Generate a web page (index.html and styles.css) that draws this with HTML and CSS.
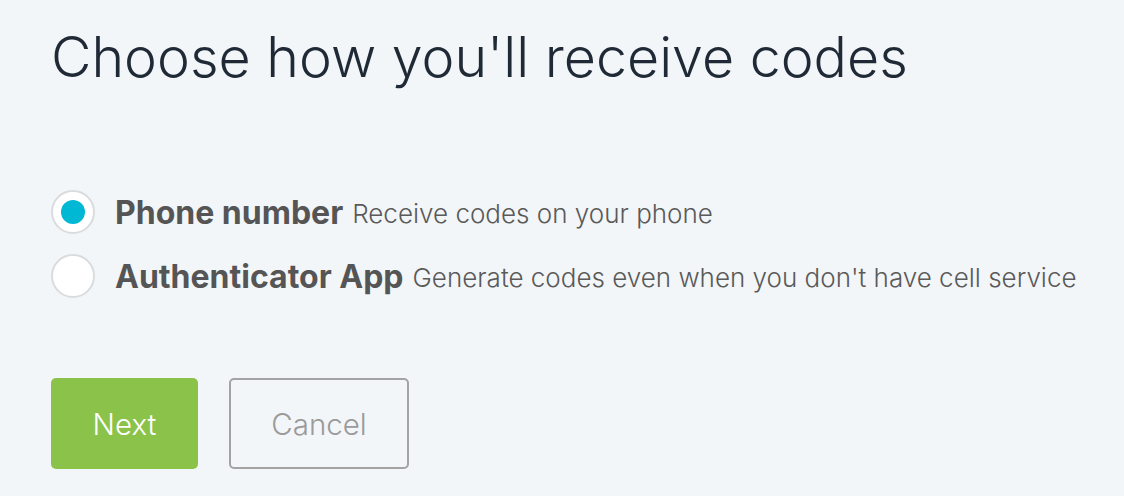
FILE: index.html
```html
<!DOCTYPE html>
<html lang="en">
<head>
    <meta charset="UTF-8">
    <meta name="viewport" content="width=device-width, initial-scale=1.0">
    <title>Two-factor setup</title>
    <link rel="stylesheet" href="styles.css">
</head>
<body>
    <div class="container">
        <h1>Choose how you'll receive codes</h1>
        <div class="options">
            <label class="option">
                <input type="radio" name="method" value="phone" checked>
                <span class="dot"></span>
                <span class="title">Phone number</span>
                <span class="desc">Receive codes on your phone</span>
            </label>
            <label class="option">
                <input type="radio" name="method" value="app">
                <span class="dot"></span>
                <span class="title">Authenticator App</span>
                <span class="desc">Generate codes even when you don't have cell service</span>
            </label>
        </div>
        <div class="actions">
            <button class="btn btn-next">Next</button>
            <button class="btn btn-cancel">Cancel</button>
        </div>
    </div>
</body>
</html>
```

FILE: styles.css
```css
body {
    margin: 0;
    background-color: #f3f6f8;
    font-family: Inter, "Open Sans", sans-serif;
}
.container {
    padding: 17px 51px 0;
}
h1 {
    margin: 0;
    font-size: 55.5px;
    font-weight: 300;
    color: #1f2a36;
    line-height: 80px;
}
.options {
    margin-top: 93px;
    display: flex;
    flex-direction: column;
    gap: 20px;
}
.option {
    display: flex;
    align-items: center;
    height: 44px;
    white-space: nowrap;
    cursor: pointer;
}
.option input {
    display: none;
}
.dot {
    box-sizing: border-box;
    width: 44px;
    height: 44px;
    border: 2px solid #d9dcde;
    border-radius: 50%;
    background-color: #fff;
    display: flex;
    align-items: center;
    justify-content: center;
    margin-right: 20px;
    flex-shrink: 0;
}
.option input:checked + .dot::after {
    content: "";
    width: 24px;
    height: 24px;
    border-radius: 50%;
    background-color: #00b8d4;
}
.title {
    font-weight: 700;
    font-size: 32px;
    color: #555;
    margin-right: 9px;
}
.desc {
    font-size: 26px;
    font-weight: 300;
    color: #5a5a5a;
    padding-top: 2px;
}
.actions {
    margin-top: 80px;
    display: flex;
    gap: 31px;
}
.btn {
    height: 91px;
    font-family: Inter, sans-serif;
    font-size: 29.5px;
    font-weight: 300;
    border-radius: 5px;
    cursor: pointer;
}
.btn-next {
    width: 147px;
    background-color: #8bc34a;
    border: none;
    color: #fff;
}
.btn-cancel {
    width: 180px;
    background-color: transparent;
    border: 2px solid #a3a3a3;
    color: #9a9a9a;
}
```
